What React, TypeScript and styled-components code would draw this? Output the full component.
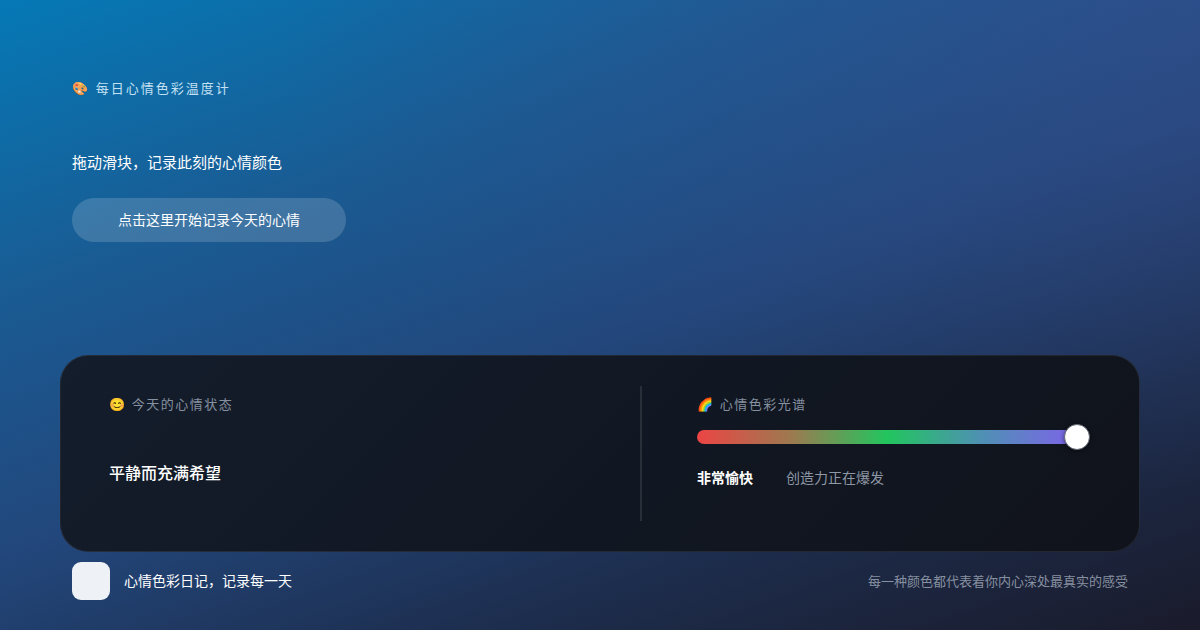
import React from "react";
import styled, { createGlobalStyle } from "styled-components";

const Global = createGlobalStyle`
  html, body { margin: 0; padding: 0; }
  body {
    width: 1200px;
    height: 630px;
    overflow: hidden;
    font-family: "Inter", "Noto Sans CJK SC", sans-serif;
  }
`;

const Page = styled.div`
  width: 1200px;
  height: 630px;
  box-sizing: border-box;
  display: flex;
  flex-direction: column;
  padding-top: 80px;
  background:
    radial-gradient(ellipse at 100% 0%, rgba(58, 76, 140, 0.5), transparent 55%),
    linear-gradient(160deg, #0579b6 0%, #1a5b93 28%, #22477c 52%, #1d2d4d 76%, #1a1b2b 100%);
`;

const Hero = styled.section`
  display: flex;
  flex-direction: column;
  align-items: flex-start;
  padding: 0 72px;
`;

const Eyebrow = styled.div`
  font-size: 13px;
  line-height: 16px;
  letter-spacing: 2px;
  color: #c4e0f3;
`;

const Lead = styled.p`
  margin: 58px 0 0;
  font-size: 15px;
  line-height: 18px;
  color: #ffffff;
`;

const PillButton = styled.button`
  margin-top: 26px;
  height: 44px;
  padding: 0 46px;
  border: none;
  border-radius: 22px;
  background: rgba(255, 255, 255, 0.16);
  color: #ffffff;
  font-family: inherit;
  font-size: 14px;
  line-height: 18px;
  cursor: pointer;
`;

const Card = styled.section`
  margin: 113px 60px 0;
  height: 197px;
  box-sizing: border-box;
  padding: 30px 48px;
  border-radius: 28px;
  border: 1px solid rgba(255, 255, 255, 0.08);
  background: linear-gradient(135deg, #141d2c 0%, #111722 55%, #10131b 100%);
  display: grid;
  grid-template-columns: 1fr 1px 394px;
  column-gap: 55px;
`;

const Column = styled.div`
  display: flex;
  flex-direction: column;
  align-items: flex-start;
  padding-top: 9px;
`;

const Divider = styled.div`
  margin-left: -1px;
  background: rgba(255, 255, 255, 0.1);
`;

const CardLabel = styled.div`
  font-size: 13px;
  line-height: 18px;
  letter-spacing: 1.5px;
  color: #8590a0;
`;

const MoodValue = styled.div`
  margin-top: 50px;
  font-size: 16px;
  line-height: 20px;
  font-weight: 500;
  color: #ffffff;
`;

const Slider = styled.div`
  margin-top: 11px;
  width: 393px;
  height: 26px;
  position: relative;
  display: flex;
  align-items: center;
`;

const Track = styled.div`
  width: 380px;
  height: 14px;
  border-radius: 7px;
  background: linear-gradient(90deg, #ec4545 0%, #9c7a50 25%, #22c55e 50%, #4f90b4 75%, #7e63ea 100%);
`;

/* knob sits on top of the track at the current value */
const Thumb = styled.div`
  position: absolute;
  left: 367px;
  top: 0;
  width: 26px;
  height: 26px;
  box-sizing: border-box;
  border-radius: 50%;
  background: #ffffff;
  border: 1px solid #5f6570;
  box-shadow: 0 1px 4px rgba(0, 0, 0, 0.5);
`;

const Readout = styled.div`
  margin-top: 19px;
  display: flex;
  align-items: baseline;
  gap: 33px;
  line-height: 18px;
`;

const ReadoutMain = styled.span`
  font-size: 14px;
  font-weight: 700;
  color: #ffffff;
`;

const ReadoutNote = styled.span`
  font-size: 14px;
  color: #8e97a5;
`;

const Footer = styled.footer`
  margin: 10px 72px 0;
  display: flex;
  align-items: center;
  justify-content: space-between;
`;

const Brand = styled.div`
  display: flex;
  align-items: center;
  gap: 14px;
`;

const Logo = styled.div`
  width: 38px;
  height: 38px;
  border-radius: 9px;
  background: #eef1f5;
`;

const BrandName = styled.span`
  font-size: 14px;
  line-height: 18px;
  color: #ffffff;
`;

const Caption = styled.span`
  font-size: 13px;
  line-height: 18px;
  color: #8790a0;
`;

export default function App() {
  return (
    <>
      <Global />
      <Page>
        <Hero>
          <Eyebrow>🎨 每日心情色彩温度计</Eyebrow>
          <Lead>拖动滑块，记录此刻的心情颜色</Lead>
          <PillButton>点击这里开始记录今天的心情</PillButton>
        </Hero>

        <Card>
          <Column>
            <CardLabel>😊 今天的心情状态</CardLabel>
            <MoodValue>平静而充满希望</MoodValue>
          </Column>
          <Divider />
          <Column>
            <CardLabel>🌈 心情色彩光谱</CardLabel>
            <Slider>
              <Track />
              <Thumb />
            </Slider>
            <Readout>
              <ReadoutMain>非常愉快</ReadoutMain>
              <ReadoutNote>创造力正在爆发</ReadoutNote>
            </Readout>
          </Column>
        </Card>

        <Footer>
          <Brand>
            <Logo />
            <BrandName>心情色彩日记，记录每一天</BrandName>
          </Brand>
          <Caption>每一种颜色都代表着你内心深处最真实的感受</Caption>
        </Footer>
      </Page>
    </>
  );
}
